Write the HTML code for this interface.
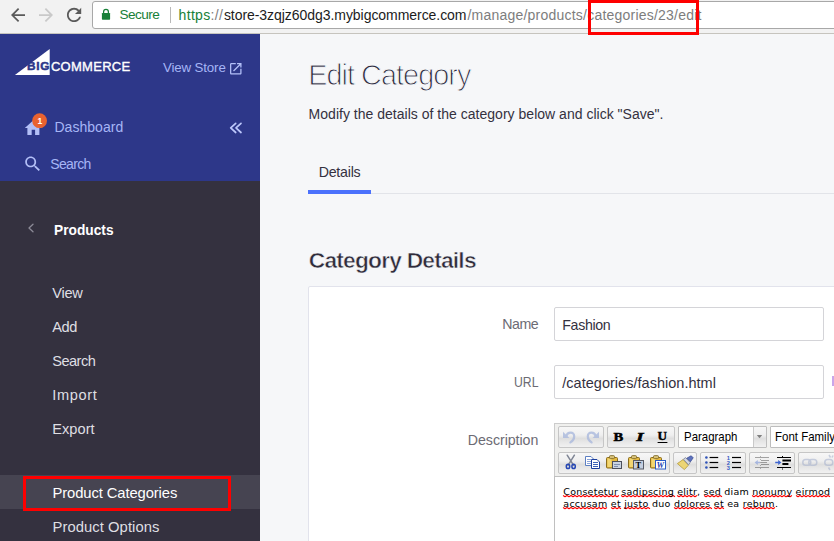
<!DOCTYPE html>
<html lang="en">
<head>
<meta charset="utf-8">
<title>Edit Category</title>
<style>
*{box-sizing:border-box;margin:0;padding:0}
html,body{width:834px;height:541px;overflow:hidden;background:#f6f7f9;font-family:"Liberation Sans",sans-serif}
.t{position:absolute;white-space:nowrap}
.r{position:absolute}
#chrome{position:absolute;left:0;top:0;width:834px;height:34px;background:#f2f2f2;border-bottom:1px solid #c6c4be}
#omni{position:absolute;left:92px;top:1px;width:760px;height:28px;background:#fff;border:1px solid #a8a8a8;border-radius:3px}
#side-top{position:absolute;left:0;top:34px;width:260px;height:147px;background:#2d3789}
#side-bot{position:absolute;left:0;top:181px;width:260px;height:360px;background:#34313f}
#panel{position:absolute;left:308px;top:286px;width:540px;height:270px;background:#fff;border:1px solid #e2e3ec;border-radius:2px}
.inp{position:absolute;width:270px;height:34px;background:#fff;border:1px solid #d4d4d8;border-radius:2px}
#ed{position:absolute;left:554px;top:423px;width:300px;height:54px;background:#f0f0ee;border:1px solid #cccccc;border-bottom:0}
#edbody{position:absolute;left:554px;top:476px;width:300px;height:80px;background:#fff;border:1px solid #c0c0c0}

.g{position:absolute;height:22px;border:1px solid #c6c6c6;border-radius:2px;background:linear-gradient(#f7f7f7 0%,#efefef 40%,#dedede 58%,#e6e6e6 72%,#f1f1f1 100%)}
.sel{position:absolute;height:22px;border:1px solid #bdbdbd;border-radius:1px;background:#fff}
.sel i{position:absolute;right:0;top:0;width:13px;height:20px;border-left:1px solid #c9c9c9;background:linear-gradient(#f7f7f7 0%,#efefef 40%,#dedede 58%,#e6e6e6 72%,#f1f1f1 100%)}
.red{position:absolute;border:3px solid #fe0000}
</style>
</head>
<body>
<div id="chrome"><div id="omni"></div>
<div class="t" id="secure" style="left:119.50px;top:8.19px;font:13.6px/13.6px 'Liberation Sans',sans-serif;letter-spacing:-0.557px;color:#188038;">Secure</div>
<div class="r" style="left:170px;top:7px;width:1px;height:16px;background:#b9b9b9"></div>
<div class="t" id="url1" style="left:178.60px;top:8.05px;font:14px/14px 'Liberation Sans',sans-serif;letter-spacing:0.310px;color:#188038;">https<span style="color:#7d7d7d">://</span></div>
<div class="t" id="url2" style="left:223.90px;top:8.05px;font:14px/14px 'Liberation Sans',sans-serif;letter-spacing:-0.052px;color:#1c1c1c;">store-3zqjz60dg3.mybigcommerce.com</div>
<div class="t" id="url3" style="left:467.40px;top:8.05px;font:14px/14px 'Liberation Sans',sans-serif;letter-spacing:0.224px;color:#7d7d7d;">/manage/products/categories/23/edit</div>
</div>
<div id="side-top"></div><div id="side-bot"></div>
<svg class="r" style="left:0;top:0" width="834" height="541" viewBox="0 0 834 541">
<g transform="translate(7.5,4.5) scale(0.875)"><path d="M20 11H7.83l5.590-5.590L12 4l-8 8 8 8 1.410-1.410L7.830 13H20v-2z" fill="#5a5a5a"/></g>
<g transform="translate(35.5,4.5) scale(0.875)"><path d="M12 4l-1.410 1.410L16.170 11H4v2h12.170l-5.580 5.590L12 20l8-8z" fill="#c9c9c9"/></g>
<g transform="translate(63.400,4.3) scale(0.890)"><path d="M17.650 6.350C16.200 4.900 14.210 4 12 4c-4.420 0-7.990 3.580-7.990 8s3.570 8 7.990 8c3.730 0 6.840-2.550 7.730-6h-2.080c-.820 2.330-3.040 4-5.650 4-3.310 0-6-2.690-6-6s2.690-6 6-6c1.660 0 3.140.69 4.220 1.780L13 11h7V4l-2.350 2.350z" fill="#5a5a5a"/></g>
<path d="M103.600 13.600 v-1.900 a2.400 2.400 0 0 1 4.800 0 v1.900" fill="none" stroke="#188038" stroke-width="1.250"/>
<rect x="101.900" y="12.900" width="8.200" height="6.900" rx="0.700" fill="#188038"/>
<path d="M14.900 74.900 L49.700 74.900 L49.700 48.900 Z" fill="#fff"/>
<g transform="translate(228.100,61.100) scale(0.640)"><path d="M19 19H5V5h7V3H5c-1.110 0-2 .9-2 2v14c0 1.100.89 2 2 2h14c1.100 0 2-.9 2-2v-7h-2v7zM14 3v2h3.590l-9.830 9.830 1.410 1.410L19 6.410V10h2V3h-7z" fill="#b3c0f8"/></g>
<g transform="translate(23.100,117.800) scale(0.857)"><path d="M10 20v-6h4v6h5v-8h3L12 3 2 12h3v8z" fill="#b3bff7"/></g>
<circle cx="39.600" cy="120.700" r="7.400" fill="#e9622f"/>
<g transform="translate(22.700,153.900) scale(0.840)"><path d="M15.500 14h-.790l-.280-.270C15.410 12.590 16 11.110 16 9.500 16 5.910 13.090 3 9.500 3S3 5.910 3 9.500 5.910 16 9.500 16c1.610 0 3.090-.590 4.230-1.570l.270.280v.790l5 4.990L20.490 19l-4.990-5zm-6 0C7.010 14 5 11.990 5 9.500S7.010 5 9.500 5 14 7.010 14 9.500 11.990 14 9.500 14z" fill="#b3bff7"/></g>
<path d="M235.700 123.300 L230.700 127.900 L235.700 132.500 M241 123.300 L236 127.900 L241 132.500" fill="none" stroke="#bcc7fb" stroke-width="1.700" stroke-linecap="round" stroke-linejoin="round"/>
<path d="M33 224.300 L29 228 L33 231.700" fill="none" stroke="#8d8b98" stroke-width="1.300" stroke-linecap="round" stroke-linejoin="round"/>
</svg>
<div class="t" id="big" style="left:27.00px;top:60.81px;font:bold 11.8px/11.8px 'Liberation Sans',sans-serif;letter-spacing:0.710px;color:#2d3789;-webkit-text-stroke:0.5px #2d3789;">BIG</div>
<div class="t" id="commerce" style="left:50.90px;top:60.00px;font:13px/13px 'Liberation Sans',sans-serif;letter-spacing:0.290px;color:#fff;-webkit-text-stroke:0.35px #fff;">COMMERCE</div>
<div class="t" id="badge" style="left:37.60px;top:117.12px;font:bold 8.6px/8.6px 'Liberation Sans',sans-serif;letter-spacing:0.000px;color:#fff;">1</div>
<div class="t" id="viewstore" style="left:163.00px;top:60.74px;font:13.3px/13.3px 'Liberation Sans',sans-serif;letter-spacing:-0.141px;color:#a6b5f6;">View Store</div>
<div class="t" id="dash" style="left:54.40px;top:120.15px;font:14px/14px 'Liberation Sans',sans-serif;letter-spacing:0.052px;color:#a6b5f6;">Dashboard</div>
<div class="t" id="srch" style="left:50.20px;top:157.15px;font:14px/14px 'Liberation Sans',sans-serif;letter-spacing:-0.650px;color:#a6b5f6;">Search</div>
<div class="t" id="products" style="left:53.60px;top:221.86px;font:bold 15.4px/15.4px 'Liberation Sans',sans-serif;letter-spacing:0.000px;color:#fff;transform:scaleX(0.8930);transform-origin:0.00px 50%;">Products</div>
<div class="t" id="n1" style="left:52.30px;top:286.14px;font:14.6px/14.6px 'Liberation Sans',sans-serif;letter-spacing:-0.273px;color:#dfdfe3;">View</div>
<div class="t" id="n2" style="left:52.30px;top:320.14px;font:14.6px/14.6px 'Liberation Sans',sans-serif;letter-spacing:-0.487px;color:#dfdfe3;">Add</div>
<div class="t" id="n3" style="left:52.30px;top:354.14px;font:14.6px/14.6px 'Liberation Sans',sans-serif;letter-spacing:-0.551px;color:#dfdfe3;">Search</div>
<div class="t" id="n4" style="left:52.30px;top:388.14px;font:14.6px/14.6px 'Liberation Sans',sans-serif;letter-spacing:0.625px;color:#dfdfe3;">Import</div>
<div class="t" id="n5" style="left:52.30px;top:422.14px;font:14.6px/14.6px 'Liberation Sans',sans-serif;letter-spacing:0.021px;color:#dfdfe3;">Export</div>
<div class="r" style="left:0;top:475px;width:260px;height:34px;background:#464451"></div>
<div class="t" id="n6" style="left:52.50px;top:485.97px;font:14.8px/14.8px 'Liberation Sans',sans-serif;letter-spacing:-0.111px;color:#fff;">Product Categories</div>
<div class="t" id="n7" style="left:52.50px;top:519.77px;font:14.8px/14.8px 'Liberation Sans',sans-serif;letter-spacing:0.056px;color:#dfdfe3;">Product Options</div>
<div class="t" id="h1" style="left:308.20px;top:61.02px;font:28.8px/28.8px 'Liberation Sans',sans-serif;letter-spacing:-0.942px;color:#2c2a3e;-webkit-text-stroke:1px #f6f7f9;">Edit Category</div>
<div class="t" id="sub" style="left:308.60px;top:107.25px;font:14px/14px 'Liberation Sans',sans-serif;letter-spacing:0.017px;color:#34313f;">Modify the details of the category below and click "Save".</div>
<div class="t" id="tab" style="left:318.70px;top:164.88px;font:14.2px/14.2px 'Liberation Sans',sans-serif;letter-spacing:-0.235px;color:#34313f;">Details</div>
<div class="r" style="left:308px;top:193px;width:526px;height:1px;background:#e2e4e9"></div>
<div class="r" style="left:308px;top:190px;width:63px;height:4px;background:#4b71fc"></div>
<div class="t" id="h2" style="left:308.80px;top:248.70px;font:bold 22.8px/22.8px 'Liberation Sans',sans-serif;letter-spacing:-0.809px;color:#2f2c3b;-webkit-text-stroke:0.55px #f6f7f9;">Category Details</div>
<div id="panel"></div>
<div class="t" id="lname" style="left:502.30px;top:317.28px;font:14.2px/14.2px 'Liberation Sans',sans-serif;letter-spacing:-0.462px;color:#6c6b74;">Name</div>
<div class="inp" style="left:554px;top:307px"></div>
<div class="t" id="vname" style="left:562.30px;top:318.28px;font:14.2px/14.2px 'Liberation Sans',sans-serif;letter-spacing:-0.354px;color:#34313f;">Fashion</div>
<div class="t" id="lurl" style="left:514.30px;top:375.28px;font:14.2px/14.2px 'Liberation Sans',sans-serif;letter-spacing:0.000px;color:#6c6b74;transform:scaleX(0.8622);transform-origin:0.00px 50%;">URL</div>
<div class="inp" style="left:554px;top:365px"></div>
<div class="t" id="vurl" style="left:562.30px;top:376.23px;font:14.5px/14.5px 'Liberation Sans',sans-serif;letter-spacing:0.020px;color:#34313f;">/categories/fashion.html</div>
<div class="r" style="left:832px;top:376px;width:2px;height:10px;background:#c9a6ea"></div>
<div class="t" id="ldesc" style="left:467.80px;top:433.08px;font:14.2px/14.2px 'Liberation Sans',sans-serif;letter-spacing:-0.043px;color:#6c6b74;">Description</div>
<div id="ed"></div><div id="edbody"></div>
<svg class="r" style="left:0;top:0" width="834" height="541" viewBox="0 0 834 541"><path d="M563 495.6 L565 496.7 L567 495.5 L569 496.7 L571 495.5 L573 496.7 L575 495.5 L577 496.7 L579 495.5 L581 496.7 L583 495.5 L585 496.7 L587 495.5 L589 496.7 L591 495.5 L593 496.7 L595 495.5 L597 496.7 L599 495.5 L601 496.7 L603 495.5 L605 496.7 L607 495.5 L609 496.7 L611 495.5 L613 496.7 L615 495.5 L617 496.7 L619 495.5 M621 495.6 L623 496.7 L625 495.5 L627 496.7 L629 495.5 L631 496.7 L633 495.5 L635 496.7 L637 495.5 L639 496.7 L641 495.5 L643 496.7 L645 495.5 L647 496.7 L649 495.5 L651 496.7 L653 495.5 L655 496.7 L657 495.5 L659 496.7 L661 495.5 L663 496.7 L665 495.5 L667 496.7 L669 495.5 L671 496.7 L673 495.5 L675 496.7 M677 495.6 L679 496.7 L681 495.5 L683 496.7 L685 495.5 L687 496.7 L689 495.5 L691 496.7 L693 495.5 L695 496.7 L697 495.5 M704 495.6 L706 496.7 L708 495.5 L710 496.7 L712 495.5 L714 496.7 L716 495.5 L718 496.7 L720 495.5 L722 496.7 M752 495.6 L754 496.7 L756 495.5 L758 496.7 L760 495.5 L762 496.7 L764 495.5 L766 496.7 L768 495.5 L770 496.7 L772 495.5 L774 496.7 L776 495.5 L778 496.7 L780 495.5 L782 496.7 L784 495.5 L786 496.7 L788 495.5 L790 496.7 L792 495.5 M796 495.6 L798 496.7 L800 495.5 L802 496.7 L804 495.5 L806 496.7 L808 495.5 L810 496.7 L812 495.5 L814 496.7 L816 495.5 L818 496.7 L820 495.5 L822 496.7 L824 495.5 L826 496.7 L828 495.5 L830 496.7 M563 507.6 L565 508.7 L567 507.5 L569 508.7 L571 507.5 L573 508.7 L575 507.5 L577 508.7 L579 507.5 L581 508.7 L583 507.5 L585 508.7 L587 507.5 L589 508.7 L591 507.5 L593 508.7 L595 507.5 L597 508.7 L599 507.5 L601 508.7 L603 507.5 L605 508.7 L607 507.5 M611 507.6 L613 508.7 L615 507.5 L617 508.7 L619 507.5 L621 508.7 M624 507.6 L626 508.7 L628 507.5 L630 508.7 L632 507.5 L634 508.7 L636 507.5 L638 508.7 L640 507.5 L642 508.7 L644 507.5 L646 508.7 L648 507.5 L650 508.7 M674 507.6 L676 508.7 L678 507.5 L680 508.7 L682 507.5 L684 508.7 L686 507.5 L688 508.7 L690 507.5 L692 508.7 L694 507.5 L696 508.7 L698 507.5 L700 508.7 L702 507.5 L704 508.7 L706 507.5 L708 508.7 L710 507.5 L712 508.7 M714 507.6 L716 508.7 L718 507.5 L720 508.7 L722 507.5 L724 508.7 M743 507.6 L745 508.7 L747 507.5 L749 508.7 L751 507.5 L753 508.7 L755 507.5 L757 508.7 L759 507.5 L761 508.7 L763 507.5 L765 508.7 L767 507.5 L769 508.7 L771 507.5 L773 508.7 L775 507.5" fill="none" stroke="#ff0000" stroke-width="1.1" stroke-linejoin="round"/></svg>
<div class="t" id="l1" style="left:563.30px;top:486.96px;font:9.5px/9.5px 'DejaVu Sans','Liberation Sans',sans-serif;letter-spacing:0.227px;color:#000;"><span class="sq">Consetetur</span> <span class="sq">sadipscing</span> <span class="sq">elitr</span>, <span class="sq">sed</span> diam <span class="sq">nonumy</span> <span class="sq">eirmod</span></div>
<div class="t" id="l2" style="left:563.30px;top:498.96px;font:9.5px/9.5px 'DejaVu Sans','Liberation Sans',sans-serif;letter-spacing:0.265px;color:#000;"><span class="sq">accusam</span> <span class="sq">et</span> <span class="sq">justo</span> duo <span class="sq">dolores</span> <span class="sq">et</span> ea <span class="sq">rebum</span>.</div>
<div class="g" style="left:558px;top:426px;width:46px"></div>
<div class="g" style="left:607px;top:426px;width:68px"></div>
<div class="sel" style="left:678px;top:426px;width:89px"><i></i></div>
<div class="sel" style="left:770px;top:426px;width:100px"></div>
<div class="g" style="left:558px;top:452px;width:112px"></div>
<div class="g" style="left:673px;top:452px;width:24px"></div>
<div class="g" style="left:700px;top:452px;width:46px"></div>
<div class="g" style="left:749px;top:452px;width:46px"></div>
<div class="g" style="left:798px;top:452px;width:68px"></div>
<div class="t" id="para" style="left:683.50px;top:431.30px;font:12.4px/12.4px 'Liberation Sans',sans-serif;letter-spacing:0.000px;color:#000;transform:scaleX(0.9239);transform-origin:0.00px 50%;">Paragraph</div>
<div class="t" id="ff" style="left:775.40px;top:431.30px;font:12.4px/12.4px 'Liberation Sans',sans-serif;letter-spacing:0.000px;color:#000;transform:scaleX(0.9264);transform-origin:0.00px 50%;">Font Family</div>
<svg class="r" style="left:0;top:0" width="834" height="541" viewBox="0 0 834 541">
<g opacity="0.78"><path d="M566.2 436.2 C567.5 431.6 574.2 431.2 574.2 436.4 C574.2 439 572.6 441 570.4 442.4" fill="none" stroke="#a9b8dd" stroke-width="2.2" stroke-linecap="round"/><path d="M563 431.8 L563 438 L569.4 438 Z" fill="#a9b8dd"/></g>
<g opacity="0.78" transform="translate(1162,0) scale(-1,1)"><path d="M566.2 436.2 C567.5 431.6 574.2 431.2 574.2 436.4 C574.2 439 572.6 441 570.4 442.4" fill="none" stroke="#a9b8dd" stroke-width="2.2" stroke-linecap="round"/><path d="M563 431.8 L563 438 L569.4 438 Z" fill="#a9b8dd"/></g>
<text transform="translate(613.6,441) scale(1.16,1)" font-family="'Liberation Serif',serif" font-weight="bold" font-size="12.6" fill="#000" stroke="#000" stroke-width="0.5">B</text>
<text transform="translate(636.2,441) scale(1.5,1)" font-family="'Liberation Serif',serif" font-weight="bold" font-style="italic" font-size="12.6" fill="#000" stroke="#000" stroke-width="0.5">I</text>
<text transform="translate(657.6,440.4) scale(1.06,1)" font-family="'Liberation Serif',serif" font-weight="bold" font-size="12.4" fill="#000" stroke="#000" stroke-width="0.4">U</text>
<rect x="657.6" y="442" width="9.8" height="1" fill="#000"/>
<path d="M756.8 435 L762.2 435 L759.5 438.2 Z" fill="#808080"/>
<path d="M567.2 455.2 L573.6 465.4 M574.4 455.2 L568 465.4" stroke="#7f8594" stroke-width="1.5" fill="none" stroke-linecap="round"/>
<ellipse cx="568" cy="466.4" rx="1.7" ry="2.1" fill="none" stroke="#2647b4" stroke-width="1.5"/>
<ellipse cx="573.6" cy="466.4" rx="1.7" ry="2.1" fill="none" stroke="#2647b4" stroke-width="1.5"/>
<path d="M585.5 456.5 h5.5 l2.5 2.5 v6.5 h-8 z" fill="#fff" stroke="#5c7fc2" stroke-width="1"/>
<path d="M587 459.5 h4 M587 461.5 h4 M587 463.5 h4" stroke="#8aa3d8" stroke-width="1"/>
<path d="M591.5 459.5 h5.5 l2.500 2.5 v6.5 h-8 z" fill="#fff" stroke="#1d3f9e" stroke-width="1"/>
<path d="M593 462.5 h5 M593 464.5 h5 M593 466.5 h5" stroke="#3f63b8" stroke-width="1"/>
<rect x="606.5" y="457.5" width="11" height="10.500" rx="1" fill="#e4b93f" stroke="#8a6c1c" stroke-width="1"/>
<rect x="607.5" y="458.5" width="4" height="8.500" fill="#f2d673"/>
<rect x="609.5" y="455.600" width="5" height="3" rx="1" fill="#d8c27a" stroke="#7a6424" stroke-width="0.800"/>
<rect x="612.5" y="461.5" width="9" height="7" fill="#c9d3e2" stroke="#4b4f5c" stroke-width="1"/>
<path d="M614 464.5 h6 M614 466.5 h4" stroke="#7f8fae" stroke-width="1"/>
<rect x="628.5" y="457.5" width="11" height="10.500" rx="1" fill="#e4b93f" stroke="#8a6c1c" stroke-width="1"/>
<rect x="629.5" y="458.5" width="4" height="8.500" fill="#f2d673"/>
<rect x="631.5" y="455.600" width="5" height="3" rx="1" fill="#d8c27a" stroke="#7a6424" stroke-width="0.800"/>
<rect x="633.5" y="460.5" width="10" height="8.500" fill="#c5cfe0" stroke="#565a66" stroke-width="1"/>
<text x="635.6" y="467.8" font-family="'Liberation Serif',serif" font-weight="bold" font-size="8.5" fill="#000">T</text>
<rect x="650.5" y="457.5" width="11" height="10.500" rx="1" fill="#e4b93f" stroke="#8a6c1c" stroke-width="1"/>
<rect x="651.5" y="458.5" width="4" height="8.500" fill="#f2d673"/>
<rect x="653.5" y="455.600" width="5" height="3" rx="1" fill="#d8c27a" stroke="#7a6424" stroke-width="0.800"/>
<rect x="655.5" y="460.5" width="10" height="8.500" fill="#fff" stroke="#2c5cc4" stroke-width="1"/>
<text x="656.6" y="467.8" font-family="'Liberation Serif',serif" font-weight="bold" font-style="italic" font-size="8.5" fill="#1f44b0">W</text>
<path d="M677.4 463.6 L683 459.6 L688.4 465.2 L684.4 469.6 L682 467.6 Z" fill="#ecd574" stroke="#b39a3c" stroke-width="0.8"/>
<path d="M683.4 459.2 L685.6 457.6 L690.2 462.600 L688.6 464.8 Z" fill="#d4d8e2" stroke="#7a7f90" stroke-width="0.8"/>
<path d="M686.8 458.2 L691.2 455.8 L693.2 457.800 L690.4 461.8 Z" fill="#5d72bd" stroke="#3a4c94" stroke-width="0.8"/>
<circle cx="706.4" cy="457.5" r="1.3" fill="#3054b8"/>
<rect x="709.6" y="456.9" width="8.600" height="1.200" fill="#000"/>
<circle cx="706.4" cy="462.5" r="1.3" fill="#3054b8"/>
<rect x="709.6" y="461.9" width="8.600" height="1.200" fill="#000"/>
<circle cx="706.4" cy="467.5" r="1.3" fill="#3054b8"/>
<rect x="709.6" y="466.9" width="8.600" height="1.200" fill="#000"/>
<text x="726.8" y="459.6" font-family="'Liberation Sans',sans-serif" font-weight="bold" font-size="5.7" fill="#3558c4">1</text>
<rect x="732" y="456.9" width="9" height="1.200" fill="#000"/>
<text x="726.8" y="464.6" font-family="'Liberation Sans',sans-serif" font-weight="bold" font-size="5.7" fill="#3558c4">2</text>
<rect x="732" y="461.9" width="9" height="1.200" fill="#000"/>
<text x="726.8" y="469.6" font-family="'Liberation Sans',sans-serif" font-weight="bold" font-size="5.7" fill="#3558c4">3</text>
<rect x="732" y="466.9" width="9" height="1.200" fill="#000"/>
<g opacity="0.42"><path d="M755 457.5 h14 M755 467.5 h14 M761 460.5 h8 M761 462.500 h6 M761 464.5 h8" stroke="#333" stroke-width="1.2"/><path d="M754.6 462.500 L757.8 460 L757.8 461.8 L760 461.8 L760 463.2 L757.8 463.2 L757.8 465 Z" fill="#4f74d4"/><path d="M760.500 456 v13" stroke="#555" stroke-width="1" stroke-dasharray="1 2"/></g>
<path d="M777 457.5 h14 M777 467.5 h14" stroke="#000" stroke-width="1.200"/>
<path d="M782.4 459.6 h8.6 v2 h-8.600 z M782.4 463 h6 v2 h-6 z" fill="#000"/>
<path d="M781.4 462.500 L778.2 460 L778.2 461.8 L775.2 461.8 L775.2 463.2 L778.2 463.2 L778.2 465 Z" fill="#3e65d0"/>
<path d="M782.5 456 v1 M782.5 468.5 v1" stroke="#000" stroke-width="1"/>
<g opacity="0.6" fill="none" stroke="#a9b4cf" stroke-width="1.5"><rect x="802.8" y="459.600" width="8" height="5.600" rx="2.800"/><rect x="808.8" y="459.600" width="8" height="5.600" rx="2.800"/></g>
<g opacity="0.6" fill="none" stroke="#a9b4cf" stroke-width="1.5"><rect x="824.8" y="459.600" width="8" height="5.600" rx="2.800"/><path d="M829 455 l1.500 2.500 M830 470 l-1.500 -2.500 M833 455.500 l-1 2"/></g>
</svg>
<div class="red" style="left:588px;top:0;width:111px;height:35px"></div>
<div class="red" style="left:23px;top:476px;width:208px;height:35px"></div>
</body>
</html>
